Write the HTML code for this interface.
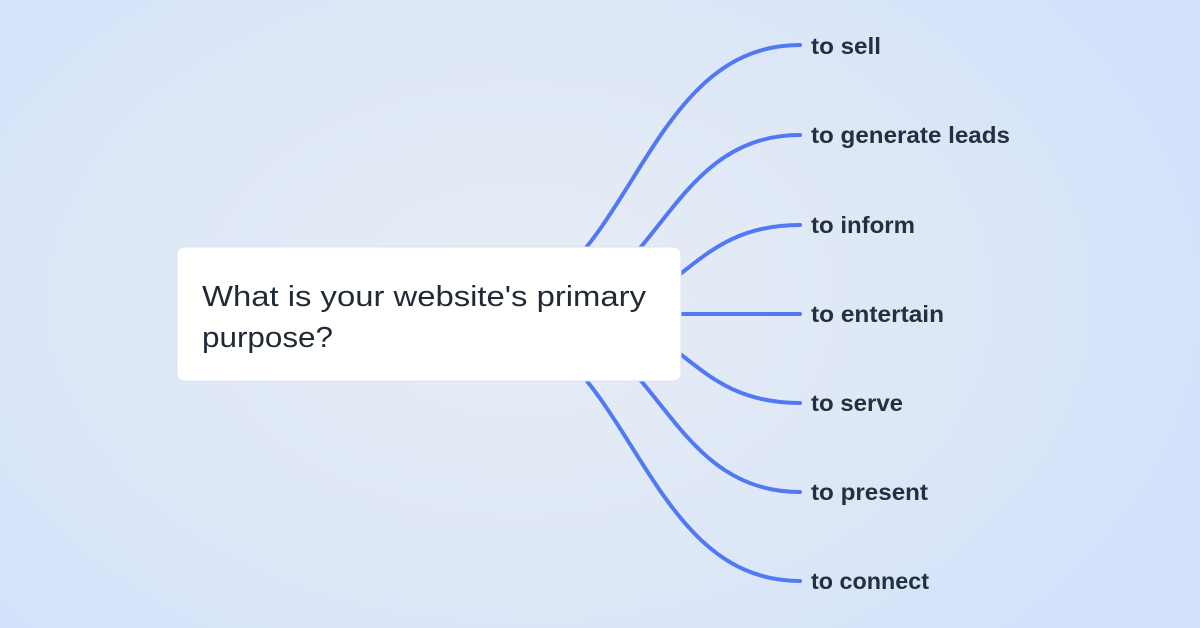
<!DOCTYPE html>
<html><head><style>
html,body{margin:0;padding:0}
body{width:1200px;height:628px;overflow:hidden;background:radial-gradient(ellipse 700px 480px at 520px 300px,#e7edf6 0%,#dfe8f6 50%,#d3e1fa 100%);font-family:"Liberation Sans",sans-serif}
</style></head><body>
<svg width="1200" height="628" viewBox="0 0 1200 628" style="position:absolute;left:0;top:0">
<g fill="none" stroke="#5079f2" stroke-width="4" stroke-linecap="round">
<path d="M465,314 C632,314 632,45 800,45"/>
<path d="M518,314 C659,314 659,135 800,135"/>
<path d="M572,314 C686,314 686,225 800,225"/>
<path d="M600,314 L800,314"/>
<path d="M572,314 C686,314 686,403 800,403"/>
<path d="M518,314 C659,314 659,492 800,492"/>
<path d="M465,314 C632,314 632,581 800,581"/>
</g>
<rect x="177" y="247" width="504" height="134" rx="7" fill="#fff" stroke="#dde3ee" stroke-width="1"/>
<g font-family="Liberation Sans, sans-serif" font-size="29" fill="#1f2a36">
<text x="202" y="306" textLength="444" lengthAdjust="spacingAndGlyphs">What is your website's primary</text>
<text x="202" y="347" textLength="131" lengthAdjust="spacingAndGlyphs">purpose?</text>
</g>
<g font-family="Liberation Sans, sans-serif" font-size="23" font-weight="bold" fill="#233040">
<text x="811" y="54" textLength="70" lengthAdjust="spacingAndGlyphs">to sell</text>
<text x="811" y="143" textLength="199" lengthAdjust="spacingAndGlyphs">to generate leads</text>
<text x="811" y="233" textLength="104" lengthAdjust="spacingAndGlyphs">to inform</text>
<text x="811" y="322" textLength="133" lengthAdjust="spacingAndGlyphs">to entertain</text>
<text x="811" y="411" textLength="92" lengthAdjust="spacingAndGlyphs">to serve</text>
<text x="811" y="500" textLength="117" lengthAdjust="spacingAndGlyphs">to present</text>
<text x="811" y="589" textLength="118" lengthAdjust="spacingAndGlyphs">to connect</text>
</g>
</svg>
</body></html>
